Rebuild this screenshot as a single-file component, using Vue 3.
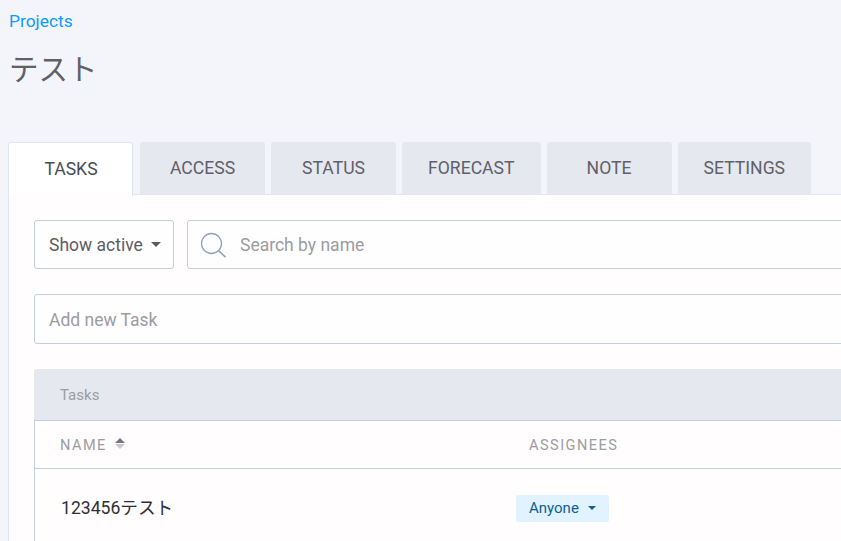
<script setup>
const tabs = ['TASKS', 'ACCESS', 'STATUS', 'FORECAST', 'NOTE', 'SETTINGS']
</script>

<template>
  <div class="page">
    <a class="crumb">Projects</a>
    <h1 class="title">テスト</h1>
    <div class="tabs">
      <div v-for="(t, i) in tabs" :key="t" class="tab" :class="{ active: i === 0 }">{{ t }}</div>
    </div>
    <div class="panel">
      <div class="filters">
        <div class="select">
          <span>Show active</span>
          <i class="caret"></i>
        </div>
        <div class="search">
          <svg class="lens" width="27" height="27" viewBox="0 0 27 27" fill="none" stroke="#8fa3bb" stroke-width="1.3">
            <circle cx="11.5" cy="11.5" r="10" />
            <path d="M18.8 18.8 25.5 25.2" stroke-width="1.6" />
          </svg>
          <span class="ph">Search by name</span>
        </div>
      </div>
      <div class="add"><span class="ph">Add new Task</span></div>
      <div class="card">
        <div class="card-head">Tasks</div>
        <div class="table">
          <div class="row head">
            <div class="c1">
              <span>NAME</span>
              <span class="sort"><i class="up"></i><i class="down"></i></span>
            </div>
            <div class="c2">ASSIGNEES</div>
          </div>
          <div class="row body">
            <div class="c1 name">123456テスト</div>
            <div class="c2b">
              <span class="pill">Anyone<i class="pill-caret"></i></span>
            </div>
          </div>
        </div>
      </div>
    </div>
  </div>
</template>

<style>
html, body { margin: 0; overflow: hidden; background: #f3f5fb; }
</style>

<style scoped>
.page {
  width: 841px;
  height: 541px;
  overflow: hidden;
  box-sizing: border-box;
  padding: 11px 0 0 8px;
  background: #f3f5fb;
  font-family: Roboto, "Noto Sans CJK JP", sans-serif;
}
.crumb { display: block; height: 20px; margin-left: 1px; font-size: 17.4px; line-height: 20px; color: #0d9bff; }
.title {
  margin: 19px 0 0 1px;
  height: 40px;
  font-size: 29.5px;
  line-height: 40px;
  font-weight: 400;
  color: #606066;
}
.tabs { display: flex; gap: 6px; margin-top: 52px; height: 53px; position: relative; z-index: 1; }
.tab {
  box-sizing: border-box;
  min-width: 125px;
  padding: 0 26px 2px;
  height: 53px;
  display: flex;
  align-items: center;
  justify-content: center;
  background: #e5e8ef;
  border-radius: 3px 3px 0 0;
  font-size: 17.6px;
  color: #5f6068;
}
.tab.active {
  background: #fff;
  border: 1px solid #dfe6f2;
  border-bottom: 0;
  height: 54px;
  margin-right: 1px;
  padding-left: 27px;
  color: #4a4c54;
}
.panel {
  box-sizing: border-box;
  width: 1100px;
  height: 360px;
  margin-top: -1px;
  padding: 25px 0 0 25px;
  background: #fffdfe;
  border-top: 1px solid #dfe6f2;
  border-left: 1px solid #dfe6f2;
}
.filters { display: flex; gap: 13px; }
.select, .search, .add {
  box-sizing: border-box;
  border: 1px solid #c3cddc;
  border-radius: 3px;
  display: flex;
  align-items: center;
  background: #fffefe;
  font-size: 17.5px;
}
.select { width: 140px; height: 49px; padding-left: 14px; color: #5c5d64; }
.caret {
  margin-left: 8px;
  border: 5px solid transparent;
  border-top-color: #5c5d64;
  border-bottom: 0;
}
.search { flex: 1; height: 49px; padding-left: 12px; }
.lens { margin-right: 13px; margin-top: 2px; }
.ph { color: #9c9ca2; }
.add { height: 50px; margin-top: 25px; padding: 2px 0 0 14px; }
.card { margin-top: 25px; }
.card-head {
  box-sizing: border-box;
  height: 51px;
  display: flex;
  align-items: center;
  padding-left: 26px;
  background: #e5e8ef;
  border-radius: 3px 3px 0 0;
  font-size: 15px;
  color: #9c9ca2;
}
.table { border-left: 1px solid #c3cddc; border-top: 1px solid #c3cddc; }
.row { display: flex; align-items: center; }
.row.head {
  height: 45px;
  padding-top: 2px;
  border-bottom: 1px solid #c3cddc;
  font-size: 14.5px;
  letter-spacing: 1.5px;
  color: #9c9ca2;
}
.c1 { width: 494px; padding-left: 25px; box-sizing: border-box; display: flex; align-items: center; }
.sort { display: inline-flex; flex-direction: column; gap: 1px; margin-left: 8px; margin-bottom: 5px; }
.up, .down { display: block; border: 5px solid transparent; }
.up { border-bottom: 5px solid #76767c; border-top: 0; }
.down { border-top: 5px solid #c9c9cd; border-bottom: 0; }
.row.body { height: 74px; }
.name { padding-left: 26px; font-size: 17.6px; color: #2f3036; }
.c2b { margin-left: -13px; margin-top: 4px; }
.pill {
  box-sizing: border-box;
  display: inline-flex;
  align-items: center;
  width: 93px;
  height: 27px;
  padding-left: 13px;
  background: #e1f3fe;
  border-radius: 2px;
  font-size: 15px;
  color: #0f5f93;
}
.pill-caret {
  margin-left: 9px;
  border: 4px solid transparent;
  border-top-color: #0f5f93;
  border-bottom: 0;
}
</style>
